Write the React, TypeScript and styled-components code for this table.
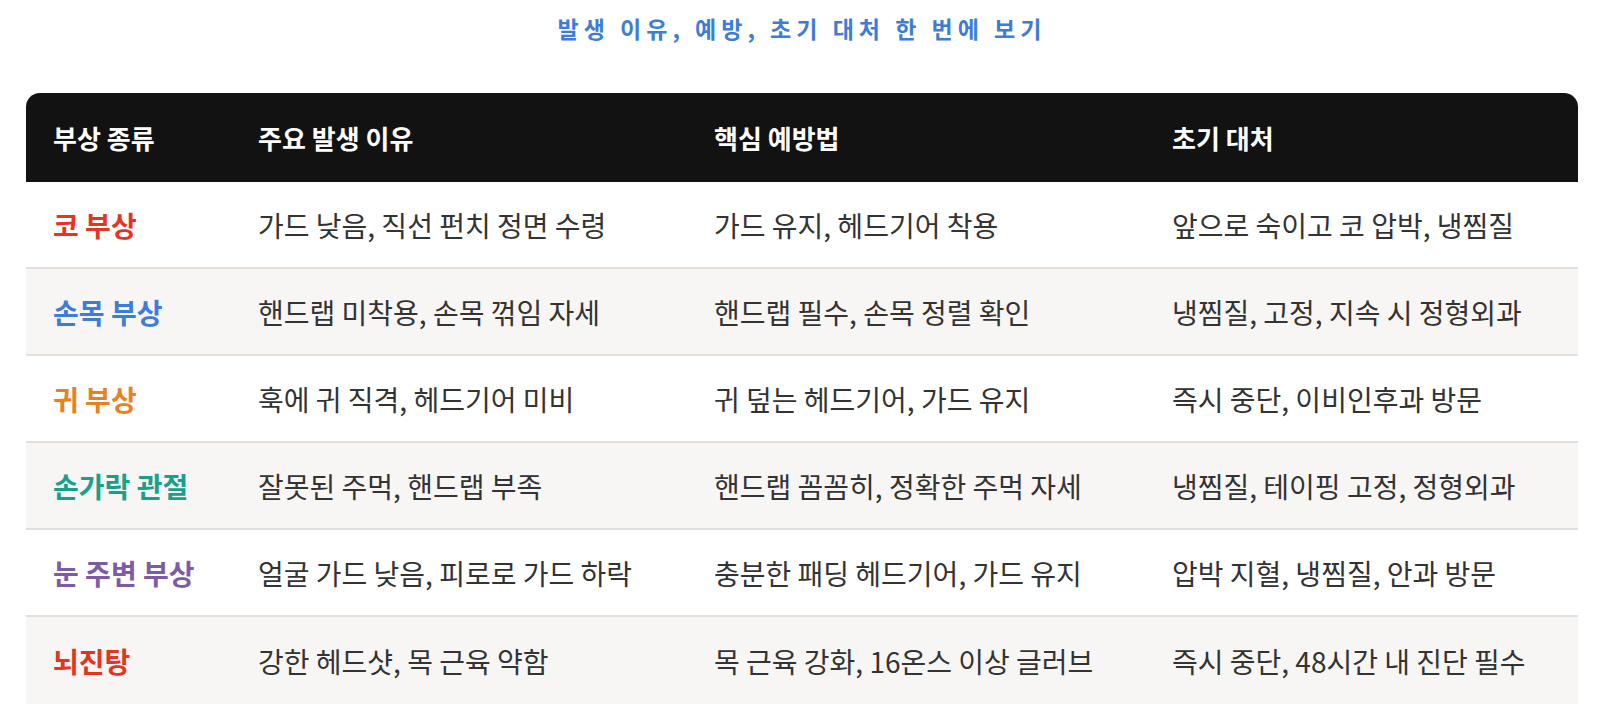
import React from 'react';
import styled, { createGlobalStyle } from 'styled-components';

const GlobalStyle = createGlobalStyle`
  html, body {
    margin: 0;
    padding: 0;
    background: #fff;
  }
  body {
    font-family: 'Noto Sans CJK KR', 'Noto Sans', sans-serif;
  }
`;

const Page = styled.div`
  width: 1552px;
  padding: 0 36px 0 26px;
`;

const Title = styled.h2`
  margin: 0;
  padding: 11px 0 0 0;
  height: 93px;
  box-sizing: border-box;
  text-align: center;
  font-size: 23px;
  line-height: 34px;
  font-weight: 700;
  letter-spacing: 5px;
  color: #3b7dd8;
`;

const Table = styled.table`
  width: 100%;
  border-collapse: separate;
  border-spacing: 0;
  table-layout: fixed;
`;

const HeadCell = styled.th`
  background: #121212;
  color: #fff;
  text-align: left;
  font-size: 26px;
  font-weight: 700;
  height: 89px;
  padding: 0 0 0 27px;
  box-sizing: border-box;

  &:first-child {
    border-top-left-radius: 14px;
  }
  &:last-child {
    border-top-right-radius: 14px;
  }
`;

const Row = styled.tr<{ $shade: boolean }>`
  background: ${({ $shade }) => ($shade ? '#f7f6f4' : '#ffffff')};
`;

const Cell = styled.td<{ $last: boolean }>`
  height: 87px;
  box-sizing: border-box;
  padding: 0 0 0 27px;
  font-size: 28px;
  color: #333;
  border-bottom: ${({ $last }) => ($last ? 'none' : '2px solid #e4dfda')};
  white-space: nowrap;
`;

const Label = styled.span<{ $color: string }>`
  font-weight: 700;
  color: ${({ $color }) => $color};
`;

const columns = [
  { title: '부상 종류', width: 205 },
  { title: '주요 발생 이유', width: 456 },
  { title: '핵심 예방법', width: 458 },
  { title: '초기 대처', width: 433 },
];

const rows = [
  { name: '코 부상', color: '#e5341f', reason: '가드 낮음, 직선 펀치 정면 수령', prevent: '가드 유지, 헤드기어 착용', first: '앞으로 숙이고 코 압박, 냉찜질' },
  { name: '손목 부상', color: '#3b7dd8', reason: '핸드랩 미착용, 손목 꺾임 자세', prevent: '핸드랩 필수, 손목 정렬 확인', first: '냉찜질, 고정, 지속 시 정형외과' },
  { name: '귀 부상', color: '#e8821e', reason: '훅에 귀 직격, 헤드기어 미비', prevent: '귀 덮는 헤드기어, 가드 유지', first: '즉시 중단, 이비인후과 방문' },
  { name: '손가락 관절', color: '#17a08a', reason: '잘못된 주먹, 핸드랩 부족', prevent: '핸드랩 꼼꼼히, 정확한 주먹 자세', first: '냉찜질, 테이핑 고정, 정형외과' },
  { name: '눈 주변 부상', color: '#7d5ba6', reason: '얼굴 가드 낮음, 피로로 가드 하락', prevent: '충분한 패딩 헤드기어, 가드 유지', first: '압박 지혈, 냉찜질, 안과 방문' },
  { name: '뇌진탕', color: '#e5341f', reason: '강한 헤드샷, 목 근육 약함', prevent: '목 근육 강화, 16온스 이상 글러브', first: '즉시 중단, 48시간 내 진단 필수' },
];

export default function App() {
  return (
    <>
      <GlobalStyle />
      <Page>
        <Title>발생 이유, 예방, 초기 대처 한 번에 보기</Title>
        <Table>
          <colgroup>
            {columns.map((c) => (
              <col key={c.title} style={{ width: c.width }} />
            ))}
          </colgroup>
          <thead>
            <tr>
              {columns.map((c) => (
                <HeadCell key={c.title}>{c.title}</HeadCell>
              ))}
            </tr>
          </thead>
          <tbody>
            {rows.map((r, i) => {
              const last = i === rows.length - 1;
              return (
                <Row key={r.name} $shade={i % 2 === 1}>
                  <Cell $last={last}>
                    <Label $color={r.color}>{r.name}</Label>
                  </Cell>
                  <Cell $last={last}>{r.reason}</Cell>
                  <Cell $last={last}>{r.prevent}</Cell>
                  <Cell $last={last}>{r.first}</Cell>
                </Row>
              );
            })}
          </tbody>
        </Table>
      </Page>
    </>
  );
}
